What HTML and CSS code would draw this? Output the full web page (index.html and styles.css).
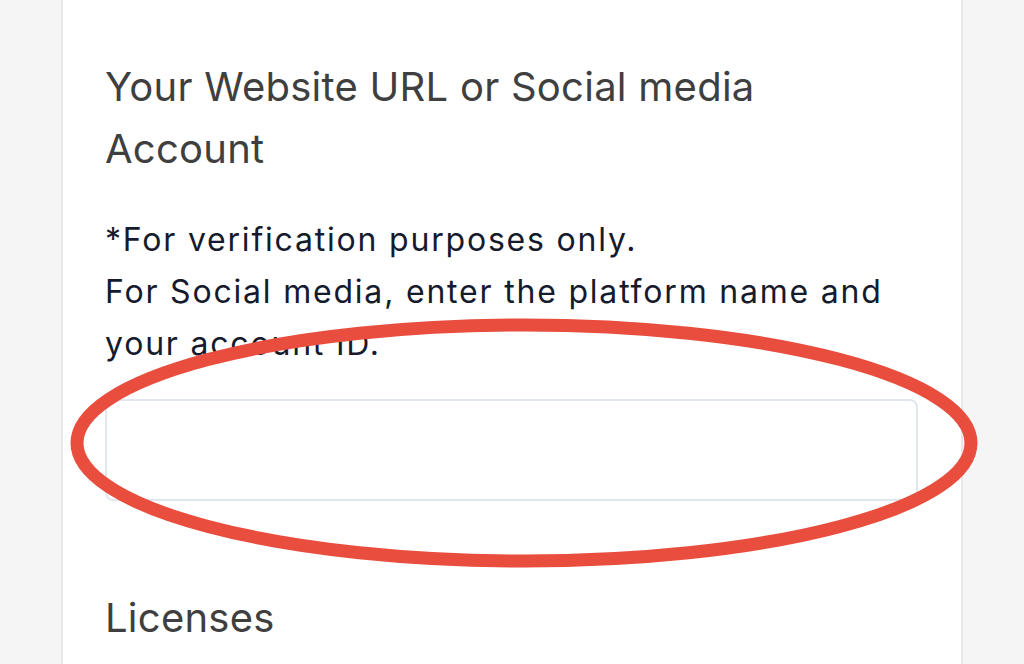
FILE: index.html
```html
<!DOCTYPE html>
<html lang="en">
<head>
<meta charset="utf-8">
<link rel="stylesheet" href="styles.css">
</head>
<body>
<div class="page">
  <section class="card">
    <h2 class="label">Your Website URL or Social media Account</h2>
    <p class="help">*For verification purposes only.<br>For Social media, enter the platform name and your account ID.</p>
    <div class="input"></div>
    <h2 class="label licenses">Licenses</h2>
  </section>
  <svg class="mark" width="1024" height="664" viewBox="0 0 1024 664">
    <ellipse cx="524" cy="443" rx="447" ry="118" fill="none" stroke="#e84d3d" stroke-width="13"/>
  </svg>
</div>
</body>
</html>
```

FILE: styles.css
```css
html, body {
  margin: 0;
  padding: 0;
  background: #f5f5f5;
  overflow: hidden;
}
.page {
  position: relative;
  width: 1024px;
  height: 664px;
  overflow: hidden;
}
.card {
  box-sizing: border-box;
  margin-left: 61px;
  width: 902px;
  height: 664px;
  background: #fff;
  border-left: 2px solid #e7e7e7;
  border-right: 2px solid #e7e7e7;
  padding: 56px 43px 0 42px;
  font-family: "Inter", "Liberation Sans", sans-serif;
}
.label {
  margin: 0;
  font-size: 40px;
  font-weight: 400;
  line-height: 61.5px;
  letter-spacing: 0.25px;
  color: #3f3f3f;
}
.help {
  margin: 34.5px 0 0 0;
  font-size: 32px;
  line-height: 52px;
  letter-spacing: 1.8px;
  color: #151a2c;
}
.input {
  margin-top: 29.5px;
  height: 98px;
  border: 2px solid #e1e7ef;
  border-radius: 8px;
}
.licenses {
  margin-top: 86px;
}
.mark {
  position: absolute;
  left: 0;
  top: 0;
  pointer-events: none;
}
```
